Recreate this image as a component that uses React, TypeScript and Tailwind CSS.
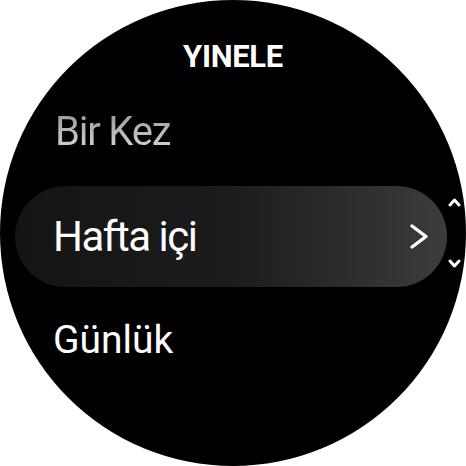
import React from 'react'

const App = () => {
  return (
    <div className="w-[466px] h-[466px] bg-white" style={{ fontFamily: 'Roboto, "Noto Sans", sans-serif' }}>
      <div className="relative w-full h-full rounded-full bg-black overflow-hidden flex flex-col">
        <div className="pt-[41px] text-center text-white font-bold text-[31px] leading-none tracking-[-0.01em]">YINELE</div>

        <div className="mt-[40px] pl-[55px] text-[40px] leading-none tracking-[-0.03em] bg-gradient-to-b from-[#9a9a9a] to-[#d8d8d8] bg-clip-text text-transparent w-fit">
          Bir Kez
        </div>

        <div className="mt-[34px] mx-[15px] mr-[19px] h-[101px] rounded-full bg-gradient-to-r from-[#141414] via-[#1c1c1c] to-[#3c3c3c] flex items-center justify-between pl-[38px] pr-[18px]">
          <span className="text-white text-[42px] leading-none tracking-[-0.035em]">Hafta içi</span>
          <svg width="20" height="27" viewBox="0 0 20 27" fill="none" stroke="white" strokeWidth="3.4" strokeLinecap="round" strokeLinejoin="round">
            <path d="M3 3 L17 13.5 L3 24" />
          </svg>
        </div>

        <div className="mt-[34px] pl-[53px] text-white text-[39px] leading-none">Günlük</div>

        <svg className="absolute left-[448px] top-[197px]" width="13" height="10" viewBox="0 0 13 10" fill="none" stroke="white" strokeWidth="3" strokeLinecap="round" strokeLinejoin="round">
          <path d="M2 8 L6.5 3 L11 8" />
        </svg>
        <svg className="absolute left-[448px] top-[259px]" width="13" height="10" viewBox="0 0 13 10" fill="none" stroke="white" strokeWidth="3" strokeLinecap="round" strokeLinejoin="round">
          <path d="M2 2 L6.5 7 L11 2" />
        </svg>
      </div>
    </div>
  )
}

export default App
